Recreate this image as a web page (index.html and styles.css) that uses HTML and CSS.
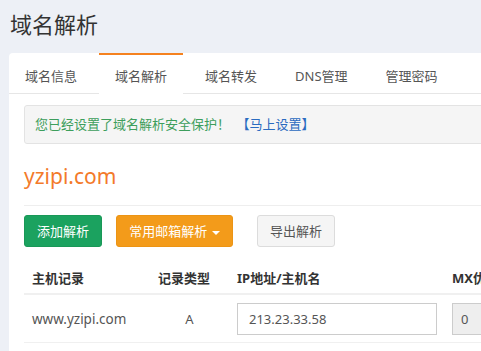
FILE: index.html
```html
<!DOCTYPE html>
<html lang="zh-CN">
<head>
<meta charset="utf-8">
<title>域名解析</title>
<link rel="stylesheet" href="styles.css">
</head>
<body>
<h1 class="page-title">域名解析</h1>
<div class="panel">
  <ul class="tabs">
    <li class="tab">域名信息</li>
    <li class="tab active">域名解析</li>
    <li class="tab">域名转发</li>
    <li class="tab">DNS管理</li>
    <li class="tab">管理密码</li>
  </ul>
  <div class="content">
    <div class="alert">您已经设置了域名解析安全保护！ <a class="alert-link" href="#">【马上设置】</a></div>
    <h2 class="domain">yzipi.com</h2>
    <div class="toolbar">
      <button class="btn btn-green">添加解析</button>
      <button class="btn btn-orange">常用邮箱解析 <span class="caret"></span></button>
      <button class="btn btn-gray">导出解析</button>
    </div>
    <table class="records">
      <colgroup>
        <col class="c-host"><col class="c-type"><col class="c-ip"><col class="c-mx">
      </colgroup>
      <thead>
        <tr><th>主机记录</th><th>记录类型</th><th>IP地址/主机名</th><th>MX优先级</th></tr>
      </thead>
      <tbody>
        <tr>
          <td class="host">www.yzipi.com</td>
          <td class="center type">A</td>
          <td><input class="field" type="text" value="213.23.33.58"></td>
          <td><input class="field field-mx" type="text" value="0" disabled></td>
        </tr>
      </tbody>
    </table>
  </div>
</div>
</body>
</html>
```
FILE: styles.css
```css
html, body {
  margin: 0;
  padding: 0;
}
body {
  background: #edf0f6;
  font-family: "Noto Sans", "Noto Sans CJK SC", sans-serif;
  color: #333;
  overflow: hidden;
  width: 481px;
  height: 351px;
}
.page-title {
  margin: 0;
  padding: 11px 10px 0;
  font-size: 22px;
  line-height: 26px;
  font-weight: normal;
  color: #333;
}
.panel {
  margin: 16px 0 0 9px;
  background: #fff;
  border-radius: 4px 0 0 0;
  width: 472px;
  height: 298px;
  overflow: hidden;
}
.tabs {
  list-style: none;
  margin: 0;
  padding: 0;
  display: flex;
  border-bottom: 1px solid #e6e6e6;
  width: 700px;
}
.tab {
  padding: 6px 16px 0;
  line-height: 34px;
  font-size: 13px;
  color: #555;
  margin-right: 6px;
  white-space: nowrap;
}
.tab.active {
  margin-top: -1px;
  margin-bottom: -1px;
  border-top: 3px solid #f5821f;
  padding-top: 4px;
  padding-bottom: 1px;
  background: #fff;
  color: #555;
}
.content {
  padding: 11px 0 0 15px;
  width: 700px;
}
.alert {
  border: 1px solid #e3e3e3;
  background: #f5f5f5;
  border-radius: 3px;
  padding: 0 10px;
  line-height: 37px;
  font-size: 13px;
  color: #3d9e5c;
}
.alert-link {
  color: #2a6bc0;
  text-decoration: none;
  margin-left: 3px;
}
.domain {
  margin: 17px 0 0;
  font-size: 21px;
  line-height: 30px;
  font-weight: normal;
  color: #f37a2a;
  padding-bottom: 14px;
  border-bottom: 1px solid #eee;
}
.toolbar {
  display: flex;
  margin-top: 9px;
}
.btn {
  font-family: inherit;
  font-size: 13px;
  height: 32px;
  padding: 0 10px;
  border-radius: 3px;
  border: 1px solid transparent;
  line-height: 30px;
  white-space: nowrap;
  cursor: pointer;
}
.btn-green {
  background: #1ba25f;
  border-color: #199857;
  color: #fff;
  width: 78px;
}
.btn-orange {
  background: #f39b1a;
  border-color: #ec9414;
  color: #fff;
  margin-left: 14px;
  width: 117px;
}
.btn-gray {
  background: #f5f5f5;
  border-color: #dcdcdc;
  color: #555;
  margin-left: 24px;
  width: 78px;
}
.caret {
  display: inline-block;
  width: 0;
  height: 0;
  border-left: 4px solid transparent;
  border-right: 4px solid transparent;
  border-top: 4px solid #fff;
  vertical-align: middle;
  margin-left: 1px;
}
.records {
  margin-top: 15px;
  border-collapse: collapse;
  table-layout: fixed;
  width: 560px;
}
.c-host { width: 126px; }
.c-type { width: 79px; }
.c-ip { width: 215px; }
.c-mx { width: 140px; }
.records th {
  text-align: left;
  font-size: 13px;
  font-weight: bold;
  color: #333;
  padding: 0 8px;
  height: 31px;
  border-bottom: 2px solid #f0f0f0;
  white-space: nowrap;
}
.records td {
  padding: 0 8px;
  height: 47px;
  border-bottom: 1px solid #f0f0f0;
  font-size: 13.5px;
  color: #555;
  white-space: nowrap;
}
.records .center {
  text-align: center;
}
.records .type {
  font-size: 13px;
}
.field {
  box-sizing: border-box;
  width: 200px;
  height: 32px;
  border: 1px solid #ccc;
  padding: 0 11px;
  font-family: inherit;
  font-size: 13px;
  color: #555;
  background: #fff;
  display: block;
}
.field-mx {
  width: 60px;
  background: #eee;
  color: #555;
  padding: 0 8px;
}
```
